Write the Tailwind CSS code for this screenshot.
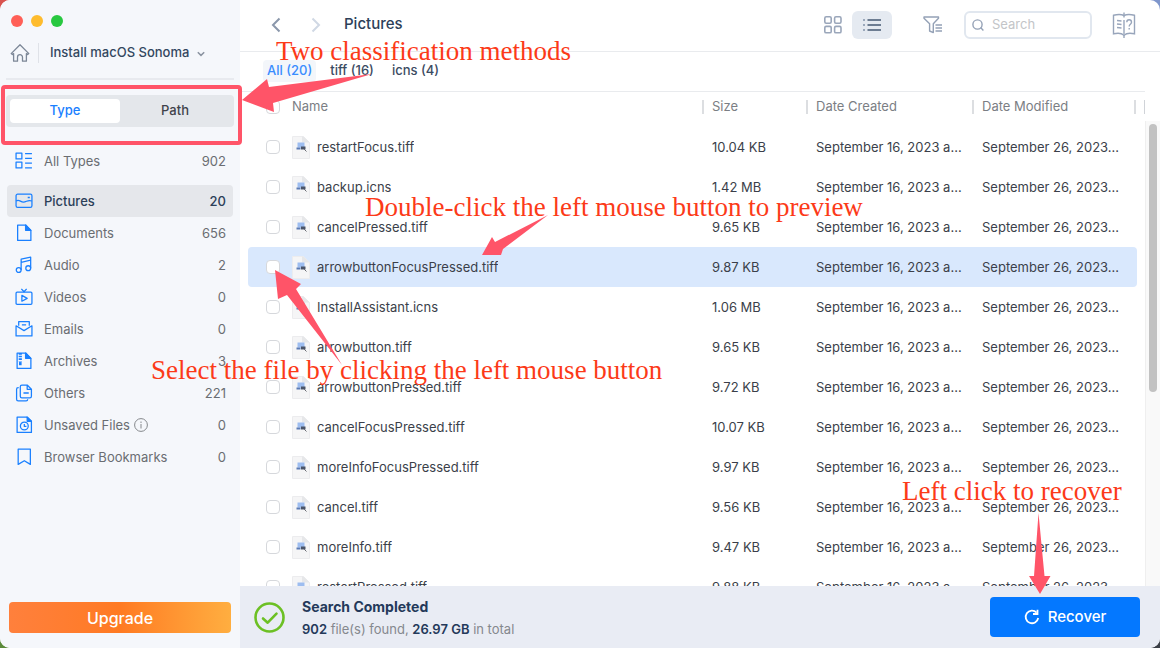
<!DOCTYPE html>
<html lang="en">
<head>
  <meta charset="UTF-8">
  <meta name="viewport" content="width=device-width, initial-scale=1">
  <title>Install macOS Sonoma - Pictures</title>
  <script src="https://cdn.jsdelivr.net/npm/@tailwindcss/browser@4"></script>
</head>
<body class="h-screen overflow-hidden bg-[conic-gradient(#7f96cc_25%,#3c4048_0_50%,#5b8a3a_0_75%,#d9534f_0)] font-['Inter','Liberation_Sans',sans-serif] text-[13px] text-[#3b3f4a]">
  <div class="relative flex h-full overflow-hidden rounded-[10px] bg-white">

    <!-- Sidebar -->
    <aside class="flex w-60 shrink-0 flex-col bg-[#f5f7fb] px-1.5 pb-[15px]">
      <div class="flex gap-2 px-1 pt-[15px] pl-[5px]">
        <span class="size-3 rounded-full bg-[#ff5f57]"></span>
        <span class="size-3 rounded-full bg-[#febc2e]"></span>
        <span class="size-3 rounded-full bg-[#28c840]"></span>
      </div>

      <div class="mt-4 flex h-5 items-center pl-1">
        <a href="#" aria-label="Home">
          <svg class="size-5" viewBox="0 0 20 20" fill="none" stroke="#7c8797" stroke-width="1.3" stroke-linejoin="round" stroke-linecap="round"><path d="M1.2 10.6 10 1.8l8.8 8.8-1.2 1-1.2-1v7.6h-3.9v-4a2.5 2.5 0 0 0-5 0v4H3.6v-7.6l-1.2 1z"/></svg>
        </a>
        <span class="ml-2 h-5 w-px bg-[#dfe2e8]"></span>
        <button class="ml-[11px] flex items-center gap-2 font-medium text-[#33475f]">
          Install macOS Sonoma
          <svg class="mt-0.5 size-2" viewBox="0 0 8 8" fill="none" stroke="#8a93a0" stroke-width="1.5"><path d="m.8 2.2 3.2 3.2 3.2-3.2"/></svg>
        </button>
      </div>

      <div class="mt-[15px] h-0.5 bg-[#e8eaef]"></div>

      <div class="mt-[15px] flex h-8 rounded bg-[#e4e7eb] p-1 font-medium">
        <button class="flex-1 rounded bg-white text-[#1a80ff]">Type</button>
        <button class="flex-1 text-[#3f434a]">Path</button>
      </div>

      <nav id="types" class="mt-[18px] px-px text-[#6a6d72]"></nav>

      <button class="mx-[3px] mt-auto h-[31px] rounded bg-linear-to-r from-[#ff803c] via-[#ff7a22] to-[#ffae40] text-base font-medium text-white">Upgrade</button>
    </aside>

    <!-- Main column -->
    <main class="flex min-w-0 flex-1 flex-col">
      <header class="flex h-[52px] shrink-0 items-center border-b border-[#e9ebee] pr-6 pb-0.5 pl-[31px]">
        <button aria-label="Back">
          <svg class="h-4 w-2.5" viewBox="0 0 10 16" fill="none" stroke="#8a97ab" stroke-width="2"><path d="M8.5 1.5 2 8l6.5 6.5"/></svg>
        </button>
        <button aria-label="Forward" class="ml-[30px]">
          <svg class="h-4 w-2.5" viewBox="0 0 10 16" fill="none" stroke="#d0d8e4" stroke-width="2"><path d="M1.5 1.5 8 8l-6.5 6.5"/></svg>
        </button>
        <h1 class="ml-[23px] text-[15px] font-medium text-[#2c4059]">Pictures</h1>

        <button aria-label="Grid view" class="ml-auto">
          <svg class="size-[18px]" viewBox="0 0 18 18" fill="none" stroke="#9aa6ba" stroke-width="1.6"><rect x=".8" y=".8" width="6.4" height="6.4" rx="1.4"/><rect x="10.6" y=".8" width="6.4" height="6.4" rx="1.4"/><rect x=".8" y="10.4" width="6.4" height="6.4" rx="1.4"/><rect x="10.6" y="10.4" width="6.4" height="6.4" rx="1.4"/></svg>
        </button>
        <button aria-label="List view" class="ml-2.5 flex h-7 w-10 items-center justify-center rounded-md bg-[#e5eaf1]">
          <svg class="h-4 w-5" viewBox="0 0 20 16" fill="none" stroke="#6d7d92" stroke-width="2"><path d="M5.5 3H19M5.5 8H19M5.5 13H19"/><path stroke="#9aa8bb" d="M1 3h2M1 8h2M1 13h2"/></svg>
        </button>
        <button aria-label="Filter" class="ml-[31px]">
          <svg class="h-[18px] w-5" viewBox="0 0 20 18" fill="none" stroke="#94a1b6" stroke-width="1.4"><path stroke-linejoin="round" d="M1 1h14.5v1.2l-5.2 5.6v8.8L6.6 15V7.8L1 2.2z"/><path d="M12.5 9H19M12.5 12H19M12.5 15H19"/></svg>
        </button>
        <label class="ml-[21px] flex h-7 w-32 items-center gap-2 rounded-md border-2 border-[#e1e7ef] pl-1.5">
          <svg class="size-3 shrink-0" viewBox="0 0 12 12" fill="none" stroke="#94a1b6" stroke-width="1.4"><circle cx="5.5" cy="5.5" r="4.6"/><path d="m8.6 8.6 2.8 2.8"/></svg>
          <input type="text" placeholder="Search" aria-label="Search" class="w-full min-w-0 outline-none placeholder:text-[#c3c5c8]">
        </label>
        <button aria-label="Help" class="ml-5">
          <svg class="h-[26px] w-6" viewBox="0 0 24 26" fill="none" stroke="#98a5bb" stroke-width="1.4"><path d="M12 3.5C9 2 5 2.400 1.500 3.200v18.600c4-1 8-.8 10.500 1.400 2.500-2.200 6.500-2.400 10.500-1.400V3.200C19 2.400 15 2 12 3.500z"/><path d="M12 .5v5M12 8v14M12 23v3M5 8.500l4.500.5M5 12l4.500.5M5 15.500l4.500.5M14.800 10.200c0-3.200 4.700-3.200 4.700 0 0 2-2.300 2-2.300 4.200M17.200 16v1.500"/></svg>
        </button>
      </header>

      <div class="mr-[15px] flex h-10 shrink-0 items-center gap-2.5 border-b border-[#e9ebee] pb-0.5 pl-[23px] font-medium text-[#3a4b62]">
        <button class="h-[22px] rounded bg-[#f3f6fa] px-1 text-[#3a8dff]">All (20)</button>
        <button class="px-1">tiff (16)</button>
        <button class="px-1">icns (4)</button>
      </div>

      <div class="flex min-h-0 flex-1 overflow-hidden">
        <div class="min-w-0 flex-1 pl-2">
          <table class="w-full table-fixed border-separate border-spacing-0 text-left">
            <thead class="text-[#7b7e84]">
              <tr>
                <th class="h-[35px] p-0 pb-1.5 font-normal">
                  <div class="flex items-center pl-[18px]">
                    <input type="checkbox" aria-label="Select all" class="size-3.5 appearance-none rounded border border-[#d6d8dc] bg-white">
                    <span class="ml-3">Name</span>
                  </div>
                </th>
                <th class="w-[104px] p-0 pb-1.5 font-normal"><div class="flex items-center gap-2"><span class="h-3.5 w-0.5 bg-[#dcdee1]"></span>Size</div></th>
                <th class="w-[166px] p-0 pb-1.5 font-normal"><div class="flex items-center gap-2"><span class="h-3.5 w-0.5 bg-[#dcdee1]"></span>Date Created</div></th>
                <th class="w-[165px] p-0 pb-1.5 font-normal"><div class="flex items-center gap-2"><span class="h-3.5 w-0.5 bg-[#dcdee1]"></span>Date Modified<span class="mr-px ml-auto h-3.5 w-0.5 bg-[#dcdee1]"></span></div></th>
                <td class="w-2 p-0 pb-1.5"><div class="h-3.5 border-r border-[#d0d3d8]"></div></td>
              </tr>
            </thead>
            <tbody id="files"></tbody>
          </table>
        </div>
        <!-- Scrollbar -->
        <div class="w-[15px] shrink-0 pt-[29px]">
          <div class="h-full border-l border-[#efefef] bg-[#f9f9f9] pt-[3px] pl-[3px]">
            <div class="h-[268px] w-2 rounded-full bg-[#c2c2c2]"></div>
          </div>
        </div>
      </div>

      <footer class="flex h-[62px] shrink-0 items-center bg-[#e9ecf4] pr-5 pl-3.5">
        <svg class="size-[31px]" viewBox="0 0 31 31" fill="none" stroke="#6cc024" stroke-width="2.600" stroke-linecap="round" stroke-linejoin="round"><circle cx="15.500" cy="15.500" r="14"/><path d="m9 16.500 4.700 4.200 8.800-9"/></svg>
        <div class="ml-[17px] text-[#24395a]">
          <h2 class="text-sm leading-5 font-bold">Search Completed</h2>
          <p class="mt-1 leading-4 text-[#85888e]"><b class="font-semibold text-[#24395a]">902</b> file(s) found, <b class="font-semibold text-[#24395a]">26.97 GB</b> in total</p>
        </div>
        <button class="ml-auto flex h-10 w-[150px] items-center justify-center gap-2 rounded bg-[#0478ff] text-[15px] font-medium text-white">
          <svg class="size-4" viewBox="0 0 16 16" fill="none" stroke="#fff" stroke-width="1.800"><path d="M12.600 3.600A6.300 6.300 0 1 0 14.200 9"/><path d="M9 5h4.500V.8"/></svg>
          Recover
        </button>
      </footer>
    </main>

    <!-- Annotations over the window -->
    <div class="pointer-events-none absolute top-[85px] left-px h-[60px] w-[241px] rounded-sm border-4 border-[#ff5468]"></div>
    <svg class="pointer-events-none absolute top-0 left-0 h-[648px] w-[1160px]" viewBox="0 0 1160 648" fill="#ff5468">
      <path d="M242 100 267 79l2 8 103-13-99 29 1 9z"/>
      <path d="m482 255 10-18 3 5 53-27-45 34-2 6z"/>
      <path d="m275 270 26 14-5 5 46 76-55-70-9 4z"/>
      <path d="m1038.500 513 6 63h6l-10.500 18-11-18h5z"/>
    </svg>
    <div class="pointer-events-none font-['Liberation_Serif','Times_New_Roman',serif] text-[27px] leading-8 whitespace-nowrap text-[#fc3a18]">
      <p class="absolute top-[35px] left-[276px]">Two classification methods</p>
      <p class="absolute top-[191px] left-[365px]">Double-click the left mouse button to preview</p>
      <p class="absolute top-[354px] left-[151px]">Select the file by clicking the left mouse button</p>
      <p class="absolute top-[475px] left-[902px]">Left click to recover</p>
    </div>
  </div>

  <script>
    const types = [
      ['All Types', 902, '<rect x="1" y="1" width="5.500" height="5.500"/><rect x="1" y="9.500" width="5.500" height="5.500"/><path d="M9.500 1.500H16M9.500 6H16M9.500 10.500H16M9.500 15H16"/>'],
      ['Pictures', 20, '<rect x="1" y="2" width="15" height="12.500" rx="1.500"/><path d="M1 8.500c3-2 4 1 7 1s4-2.500 8-1M12 5.200h2"/>'],
      ['Documents', 656, '<path d="M10 1H2.500v14.500h12.500V6z"/><path fill="#1a80ff" d="M10 1v5h5z"/>'],
      ['Audio', 2, '<circle cx="3.500" cy="13.200" r="2.300"/><circle cx="12.500" cy="11.500" r="2.300"/><path d="M5.800 13.200V3L14.800 1v10.500M5.800 6l9-2"/>'],
      ['Videos', 0, '<rect x="1" y="4" width="15" height="11.500" rx="1"/><path d="m6 .8 2.500 2.700L11 .8M6.500 7v5.500l5-2.700z"/>'],
      ['Emails', 0, '<path d="M3.500 5.500v-4h10v4M1 5.500l7.500 4.500L16 5.500v9.500H1zM6.500 4.500h4"/>'],
      ['Archives', 3, '<path d="M10 1H2v14.500h13V6z"/><path fill="#1a80ff" d="M10 1v5h5z"/><path stroke-width="3" stroke-dasharray="1.500 1" d="M5 1v8"/><path stroke-width="2.500" d="M5 9.500v3"/>'],
      ['Others', 221, '<path d="M11.500 1H6.500q-1.500 0-1.500 1.500v9q0 1.500 1.500 1.500h7.500q1.500 0 1.500-1.500V5zM11.500 1v4h4M8 8.500h5M3.500 3.500H3q-1.500 0-1.500 1.500v9.500q0 1.500 1.500 1.500h7.500q1.500 0 1.500-1.500"/>'],
      ['Unsaved Files', 0, '<path d="M11 1H2v14.500h13.500V5z"/><path fill="#1a80ff" d="M11.500 1v4h4z"/><circle cx="8.800" cy="9.500" r="3.700"/><path d="M8.800 7.500v2.300h2"/>'],
      ['Browser Bookmarks', 0, '<path d="M3 1h11.500v14.500L8.800 12 3 15.500z"/>']
    ];

    const info = '<svg class="ml-1 size-3.5" viewBox="0 0 14 14" fill="none" stroke="#85888c"><circle cx="7" cy="7" r="6.400"/><path d="M7 6v4.500M7 3.500V5"/></svg>';

    document.getElementById('types').innerHTML = types.map(([name, count, icon], i) => `
      <a href="#" class="flex h-8 items-center rounded pr-[7px] pl-2 ${i === 1 ? 'mt-2 bg-[#e5e7eb] font-medium text-[#2c4059]' : ''}">
        <svg class="h-[18px] w-[18px]" viewBox="0 0 17 17" fill="none" stroke="#1a80ff" stroke-width="1.200" stroke-linejoin="round">${icon}</svg>
        <span class="mt-0.5 ml-[11px]">${name}</span>
        ${name === 'Unsaved Files' ? info : ''}
        <span class="mt-0.5 ml-auto">${count}</span>
      </a>`).join('');

    const files = [
      ['restartFocus.tiff', '10.04 KB'],
      ['backup.icns', '1.42 MB'],
      ['cancelPressed.tiff', '9.65 KB'],
      ['arrowbuttonFocusPressed.tiff', '9.87 KB'],
      ['InstallAssistant.icns', '1.06 MB'],
      ['arrowbutton.tiff', '9.65 KB'],
      ['arrowbuttonPressed.tiff', '9.72 KB'],
      ['cancelFocusPressed.tiff', '10.07 KB'],
      ['moreInfoFocusPressed.tiff', '9.97 KB'],
      ['cancel.tiff', '9.56 KB'],
      ['moreInfo.tiff', '9.47 KB'],
      ['restartPressed.tiff', '9.88 KB']
    ];

    const fileIcon = `
      <svg class="ml-3 h-[23px] w-[18px] shrink-0" viewBox="0 0 18 23">
        <path fill="#f5f5f6" stroke="#ececee" d="M.5.5h11l6 6v16H.5z"/>
        <path fill="#e6e7e9" d="M10 .5h1.500l6 6H10z"/>
        <path fill="#9dbdf0" d="M5.500 6.500h7v5h-7z"/>
        <path fill="#5b7bb5" d="M4.500 11.500h4v2h-4z"/>
        <path fill="#4a5468" d="M9 10.500h4.500v3H9z"/>
        <path stroke="#6a6d75" d="m12 13 2.500 2.500"/>
      </svg>`;

    document.getElementById('files').innerHTML = files.map(([name, size], i) => `
      <tr class="${i === 3 ? '*:bg-[#d9e8fd]' : ''}">
        <td class="h-10 rounded-l p-0">
          <div class="flex items-center pl-[18px]">
            <input type="checkbox" aria-label="${name}" class="size-3.5 shrink-0 appearance-none rounded border border-[#d6d8dc] bg-white">
            ${fileIcon}
            <span class="mt-0.5 ml-[7px] truncate">${name}</span>
          </div>
        </td>
        <td class="p-0 pt-0.5 pl-2.5">${size}</td>
        <td class="p-0 pt-0.5 pl-2.5 whitespace-nowrap">September 16, 2023 a...</td>
        <td class="rounded-r p-0 pt-0.5 pl-2.5 whitespace-nowrap">September 26, 2023...</td>
      </tr>`).join('');
  </script>
</body>
</html>
